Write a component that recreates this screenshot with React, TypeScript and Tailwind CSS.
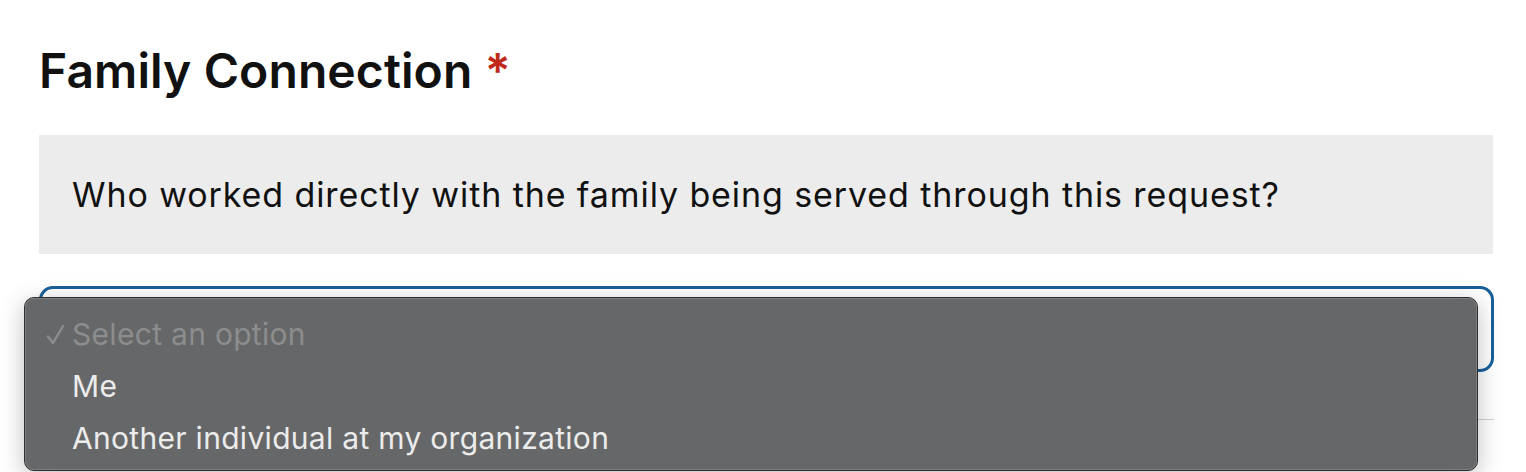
import React from 'react';

const options = ['Me', 'Another individual at my organization'];

export default function App() {
  return (
    <div className="relative h-[472px] w-[1526px] overflow-hidden bg-white font-['Inter',sans-serif] text-[#111]">
      <div className="px-[39px] pt-[42px]">
        <h2 className="text-[48px] leading-[58px] font-semibold tracking-[0.1px]">
          Family Connection <span className="text-[#c0281a]">*</span>
        </h2>

        <div className="mt-[35px] flex h-[119px] w-[1454px] items-center bg-[#ececec] px-[33px]">
          <p className="text-[34px] leading-none tracking-[0.9px] text-[#111]">
            Who worked directly with the family being served through this request?
          </p>
        </div>

        <div className="mt-[32px] h-[86px] w-[1455px] rounded-[14px] border-[3px] border-[#18609a] bg-white" />

        <div className="mt-[47px] h-px w-[1455px] bg-[#d2d2d2]" />
      </div>

      {/* native select popup */}
      <div className="absolute left-[24px] top-[297px] w-[1454px] rounded-[10px] border border-[#2e2e2e] bg-[#666768] shadow-[0_6px_24px_rgba(0,0,0,0.25)]">
        <div className="h-[172px] rounded-[9px] border border-[#7d7e7f] pt-[16px]">
          <div className="flex h-[38px] items-center text-[30px] leading-none tracking-[0.3px] text-[#8c8d8e]">
            <span className="flex w-[46px] justify-start pl-[20px]">
              <svg width="19" height="21" viewBox="0 0 19 21" fill="none">
                <path d="M2 12.5 L7 19 L17 2" stroke="#8c8d8e" strokeWidth="2.4" strokeLinecap="round" strokeLinejoin="round" />
              </svg>
            </span>
            <span>Select an option</span>
          </div>
          {options.map((o) => (
            <div key={o} className="mt-[14px] flex h-[38px] items-center pl-[46px] text-[30px] leading-none tracking-[0.3px] text-[#ececec]">
              {o}
            </div>
          ))}
        </div>
      </div>
    </div>
  );
}
